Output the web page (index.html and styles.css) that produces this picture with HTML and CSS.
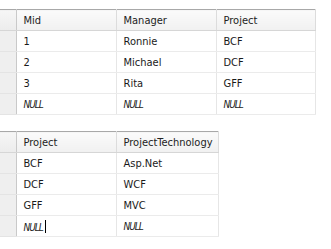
FILE: index.html
```html
<!DOCTYPE html>
<html>
<head>
<meta charset="utf-8">
<link rel="stylesheet" href="styles.css">
</head>
<body>
<div class="page">
  <table class="grid grid-top">
    <colgroup><col class="c-sel"><col class="c-100"><col class="c-100"><col class="c-98"></colgroup>
    <thead>
      <tr><th class="sel"></th><th>Mid</th><th>Manager</th><th>Project</th></tr>
    </thead>
    <tbody>
      <tr><td class="sel"></td><td>1</td><td>Ronnie</td><td>BCF</td></tr>
      <tr><td class="sel"></td><td>2</td><td>Michael</td><td>DCF</td></tr>
      <tr><td class="sel"></td><td>3</td><td>Rita</td><td>GFF</td></tr>
      <tr><td class="sel"></td><td class="null">NULL</td><td class="null">NULL</td><td class="null">NULL</td></tr>
    </tbody>
  </table>

  <table class="grid grid-bottom">
    <colgroup><col class="c-sel"><col class="c-100"><col class="c-102"></colgroup>
    <thead>
      <tr><th class="sel"></th><th>Project</th><th>ProjectTechnology</th></tr>
    </thead>
    <tbody>
      <tr><td class="sel"></td><td>BCF</td><td>Asp.Net</td></tr>
      <tr><td class="sel"></td><td>DCF</td><td>WCF</td></tr>
      <tr><td class="sel"></td><td>GFF</td><td>MVC</td></tr>
      <tr><td class="sel"></td><td class="null"><span>NULL</span><span class="caret"></span></td><td class="null">NULL</td></tr>
    </tbody>
  </table>
</div>
</body>
</html>
```

FILE: styles.css
```css
html, body {
  margin: 0;
  padding: 0;
  background: #ffffff;
}

.page {
  display: flex;
  flex-direction: column;
  align-items: flex-start;
  gap: 16px;
  padding-top: 9px;
  font-family: "DejaVu Sans Condensed", "DejaVu Sans", Tahoma, sans-serif;
  font-stretch: condensed;
  font-size: 11px;
  color: #1a1a1a;
}

.grid {
  border-collapse: collapse;
  table-layout: fixed;
}

.grid-top {
  width: 315px;
}

.grid-bottom {
  width: 218px;
}

.c-sel { width: 16px; }
.c-100 { width: 100px; }
.c-98 { width: 99px; }
.c-102 { width: 102px; }

.grid th,
.grid td {
  height: 21px;
  padding: 0 0 0 7px;
  text-align: left;
  font-weight: normal;
  white-space: nowrap;
  overflow: hidden;
  border-right: 1px solid #e6e6e6;
  border-bottom: 1px solid #ebebeb;
  box-sizing: border-box;
}

.grid th {
  background: linear-gradient(#fbfbfb, #f1f1f1);
  border-top: 1px solid #a8a8a8;
  border-bottom: 1px solid #d6d6d6;
  border-right: 1px solid #dcdcdc;
  color: #222;
}

.grid .sel {
  padding: 0;
  background: #efefef;
  border-right: 1px solid #c9c9c9;
  border-bottom: 1px solid #e4e4e4;
}

.grid th.sel {
  background: linear-gradient(#f6f6f6, #ececec);
  border-bottom: 1px solid #d6d6d6;
}

.null {
  font-style: italic;
  letter-spacing: -1px;
  font-size: 10px;
}

.caret {
  display: inline-block;
  width: 1px;
  height: 13px;
  margin-left: 2px;
  background: #000;
  vertical-align: -2px;
}
```
